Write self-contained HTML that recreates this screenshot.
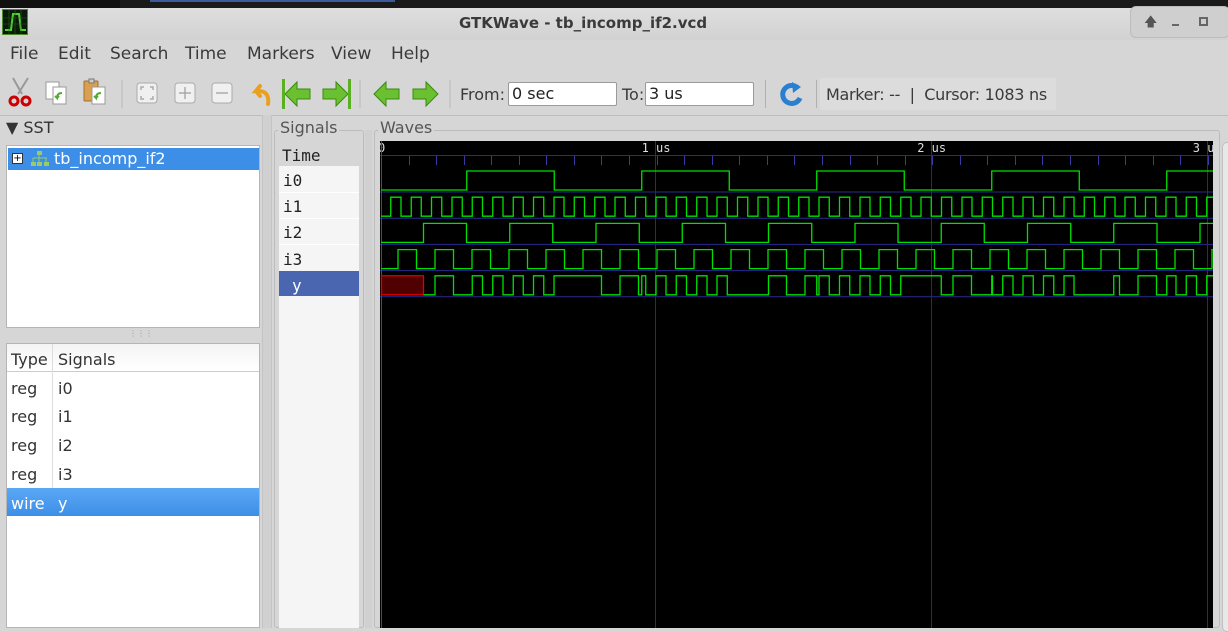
<!DOCTYPE html>
<html><head><meta charset="utf-8"><style>
*{margin:0;padding:0;box-sizing:border-box}
body{width:1228px;height:628px;overflow:hidden;background:#d6d6d6;font-family:"DejaVu Sans","Liberation Sans",sans-serif;color:#333;position:relative}
.a{position:absolute}
.menu span{position:absolute;top:44px;font-size:17px;color:#3a3a3a}
.tb{font-size:16px;color:#3a3a3a;white-space:pre}
.entry{background:#fff;border:1px solid #9a9a9a;border-radius:2px;height:24px;font-size:16px;padding:1px 3px;color:#222}
.sep{width:1px;background:#b0b0b0;height:28px;top:80px}
.mono{font-family:"DejaVu Sans Mono","Liberation Mono",monospace}
</style></head><body>
<div class="a" style="left:0;top:0;width:1228px;height:8px;background:#1a1a1a"></div>
<div class="a" style="left:150px;top:0;width:245px;height:2px;background:#3a5a9a"></div>
<div class="a" style="left:0;top:0;width:120px;height:11px;background:#111;border-radius:0 0 6px 6px"></div>
<div class="a" style="left:0;top:8px;width:1228px;height:32px;background:linear-gradient(#dedede,#d2d2d2)"></div>
<div class="a" style="left:2px;top:9px;width:26px;height:26px;background:#0a1a08;border:1px solid #4a8a2a">
<svg width="24" height="24"><path d="M2 20 L8 20 L10 4 L16 4 L18 20 L23 20" stroke="#4fd030" fill="none" stroke-width="2"/><path d="M0 8H24M0 14H24M6 0V24M12 0V24M18 0V24" stroke="#2a5a1a" stroke-width=".6"/></svg></div>
<div class="a" style="left:459px;top:14px;font-size:15px;font-weight:bold;color:#3a3a3a">GTKWave - tb_incomp_if2.vcd</div>
<div class="a" style="left:1130px;top:6px;width:100px;height:32px;background:#cfcfcf;border:1px solid #bcbcbc;border-radius:6px"></div>
<div class="a" style="left:1144px;top:13px;font-size:13px;color:#555">🡅</div>
<div class="a" style="left:1172px;top:24px;width:7px;height:2px;background:#666"></div>
<div class="a" style="left:1199px;top:17px;width:9px;height:9px;border:2px solid #666"></div>
<div class="menu"><span style="left:10px">File</span><span style="left:58px">Edit</span><span style="left:110px">Search</span><span style="left:185px">Time</span><span style="left:247px">Markers</span><span style="left:331px">View</span><span style="left:391px">Help</span></div>
<svg class="a" style="left:0;top:74px" width="460" height="40">
<g stroke="#999" fill="none" stroke-width="2"><path d="M13 4 L22 20 M28 4 L18 20"/></g>
<circle cx="14" cy="27" r="4" stroke="#c00" stroke-width="3" fill="none"/><circle cx="26" cy="27" r="4" stroke="#c00" stroke-width="3" fill="none"/>
<rect x="46" y="8" width="13" height="17" fill="#fff" stroke="#999"/><rect x="53" y="13" width="13" height="17" fill="#fff" stroke="#999"/><path d="M62 19 q-5 0 -5 5 l-2 -2 m2 2 l2 -2" stroke="#5a3" stroke-width="2" fill="none"/>
<rect x="84" y="7" width="14" height="20" rx="1" fill="#d9a050" stroke="#a07030"/><rect x="89" y="5" width="5" height="4" fill="#ccc" stroke="#777"/><rect x="92" y="13" width="13" height="17" fill="#fff" stroke="#999"/><path d="M101 19 q-5 0 -5 5 l-2 -2 m2 2 l2 -2" stroke="#5a3" stroke-width="2" fill="none"/>
<line x1="122" y1="6" x2="122" y2="34" stroke="#b8b8b8"/>
<g fill="#f0f0f0" stroke="#aaa"><rect x="137" y="9" width="20" height="20" rx="3"/><rect x="175" y="9" width="20" height="20" rx="3"/><rect x="212" y="9" width="20" height="20" rx="3"/></g>
<g stroke="#aaa" fill="none" stroke-width="1.5"><path d="M141 16v-3h3M153 16v-3h-3M141 22v3h3M153 22v3h-3"/><path d="M185 13v12M179 19h12"/><path d="M216 19h12"/></g>
<path d="M268 30 q2 -14 -12 -13 l4 -5 M256 17 l4 5" stroke="#e8a020" stroke-width="4" fill="none" stroke-linecap="round"/>
<g fill="#6ac030" stroke="#3a8a10"><path d="M285 20 l12 -12 v7 h13 v10 h-13 v7z"/><path d="M348 20 l-12 -12 v7 h-13 v10 h13 v7z"/><path d="M374 20 l12 -12 v7 h13 v10 h-13 v7z"/><path d="M438 20 l-12 -12 v7 h-13 v10 h13 v7z"/></g>
<rect x="282" y="5" width="3" height="30" fill="#5ab020"/><rect x="348" y="5" width="3" height="30" fill="#5ab020"/>
<line x1="360" y1="6" x2="360" y2="34" stroke="#b8b8b8"/><line x1="450" y1="6" x2="450" y2="34" stroke="#b8b8b8"/>
</svg>
<div class="a tb" style="left:460px;top:85px">From:</div>
<div class="a entry" style="left:508px;top:82px;width:109px">0 sec</div>
<div class="a tb" style="left:622px;top:85px">To:</div>
<div class="a entry" style="left:645px;top:82px;width:109px">3 us</div>
<div class="a sep" style="left:765px"></div>
<svg class="a" style="left:776px;top:78px" width="30" height="32"><path d="M22 10 A9 9 0 1 0 24 20" stroke="#2a80d0" stroke-width="5" fill="none"/><path d="M16 4 l9 5 -8 6z" fill="#2a80d0"/></svg>
<div class="a sep" style="left:816px"></div>
<div class="a" style="left:820px;top:78px;width:236px;height:32px;background:#dcdcdc"></div>
<div class="a tb" style="left:826px;top:85px;letter-spacing:-0.3px">Marker: --  |  Cursor: 1083 ns</div>
<div class="a" style="left:0;top:115px;width:1228px;height:1px;background:#bdbdbd"></div>
<div class="a" style="left:6px;top:118px;font-size:16px;color:#333">▼ SST</div>
<div class="a" style="left:6px;top:145px;width:254px;height:183px;background:#fff;border:1px solid #b5b5b5"></div>
<div class="a" style="left:8px;top:148px;width:251px;height:22px;background:#3d8ee6"></div>
<div class="a" style="left:12px;top:153px;width:11px;height:11px;background:#fff;border:1px solid #333;font-size:10px;line-height:9px;text-align:center;color:#000">+</div>
<svg class="a" style="left:29px;top:150px" width="22" height="18"><path d="M10 3v5M4 8h14M4 8v4M10 8v4M17 8v4" stroke="#9c6" fill="none"/><rect x="8" y="1" width="5" height="4" fill="#9c6"/><rect x="2" y="12" width="5" height="4" fill="#9c6"/><rect x="8" y="12" width="5" height="4" fill="#9c6"/><rect x="15" y="12" width="5" height="4" fill="#9c6"/></svg>
<div class="a" style="left:54px;top:149px;font-size:16px;color:#fff">tb_incomp_if2</div>
<div class="a" style="left:129px;top:329px;font-size:8px;color:#999">⋮⋮⋮</div>
<div class="a" style="left:6px;top:343px;width:254px;height:285px;background:#fff;border:1px solid #b5b5b5"></div>
<div class="a" style="left:7px;top:344px;width:252px;height:28px;background:linear-gradient(#f4f4f4,#fff);border-bottom:1px solid #ccc"></div>
<div class="a" style="left:52px;top:344px;width:1px;height:172px;background:#ddd"></div>
<div class="a" style="left:7px;top:488px;width:252px;height:28px;background:linear-gradient(#5aa8f6,#3d8ee6)"></div>
<div class="a" style="font-size:16px;left:11px;top:346px;line-height:28.7px">Type<br>reg<br>reg<br>reg<br>reg<br><span style="color:#fff">wire</span></div>
<div class="a" style="font-size:16px;left:58px;top:346px;line-height:28.7px">Signals<br>i0<br>i1<br>i2<br>i3<br><span style="color:#fff">y</span></div>
<div class="a" style="left:262px;top:115px;width:10px;height:513px;background:#d0d0d0;border-left:1px solid #c4c4c4;border-right:1px solid #c4c4c4"></div>
<div class="a" style="left:274px;top:130px;width:90px;height:498px;border:1px solid #bcbcbc;border-radius:3px"></div>
<div class="a" style="left:278px;top:118px;font-size:16px;background:#d6d6d6;padding:0 2px;color:#555">Signals</div>
<div class="a" style="left:279px;top:142px;width:80px;height:486px;background:#f5f5f5"></div>
<div class="a mono" style="left:279px;top:142px;width:80px;height:24px;background:#d6d6d6;font-size:16px;padding:4px 0 0 3px;color:#222">Time</div>
<div class="a" style="left:279px;top:192px;width:80px;height:1px;background:#fff"></div>
<div class="a" style="left:279px;top:218px;width:80px;height:1px;background:#fff"></div>
<div class="a" style="left:279px;top:244px;width:80px;height:1px;background:#fff"></div>
<div class="a" style="left:279px;top:271px;width:80px;height:25px;background:#4a66b0"></div>
<div class="a mono" style="left:283px;top:168px;font-size:16px;line-height:26.2px;color:#222">i0<br>i1<br>i2<br>i3<br><span style="color:#fff;padding-left:9px">y</span></div>
<div class="a" style="left:365px;top:130px;width:7px;height:498px;background:#d0d0d0"></div>
<div class="a" style="left:374px;top:130px;width:846px;height:498px;border:1px solid #bcbcbc;border-radius:3px"></div>
<div class="a" style="left:378px;top:118px;font-size:16px;background:#d6d6d6;padding:0 2px;color:#555">Waves</div>
<div class="a" style="left:1222px;top:142px;width:10px;height:490px;background:#e8e8e8;border:1px solid #c0c0c0;border-radius:5px"></div>
<svg id="w" class="a" style="left:380px;top:141px" width="833" height="487"></svg>
<script>
var s='<rect width="833" height="487" fill="#000"/>';
var X0=381,pu=275.6;
function px(x){return x-380}
s+='<line x1="0" y1="14.5" x2="833" y2="14.5" stroke="#2a2a80"/>';
for(var i=0;i<31;i++){var x=Math.round(X0+i*pu/10);s+='<line x1="'+(px(x)+.5)+'" y1="15" x2="'+(px(x)+.5)+'" y2="24" stroke="#3a3aa0"/>';}
['0','1 us','2 us','3 us'].forEach(function(t,i){var x=px(X0+i*pu);s+='<text x="'+(i?x-15:x-3)+'" y="11" fill="#ddd" font-family="DejaVu Sans Mono,monospace" font-size="12">'+t+'</text>';});
for(var r=0;r<5;r++){var y=51+r*26.2;s+='<line x1="0" y1="'+y+'" x2="833" y2="'+y+'" stroke="#2a2a90"/>';}
[655,931,1207].forEach(function(x){s+='<rect x="'+px(x)+'" y="0" width="1" height="487" fill="#28287a"/>';});
s+='<rect x="1" y="0" width="1" height="487" fill="#4040c0"/>';
function clk(first,half,t){var p=t-first;if(p<0)return 0;return Math.floor(p/half)%2==0?1:0;}
var sig=[function(t){return clk(466.7,87.5,t)},function(t){return clk(390.6,10.2,t)},function(t){return clk(423.3,43.15,t)},function(t){return clk(398,18.5,t)}];
function draw(f,r){var hi=25.5+r*26.2+4.5,lo=hi+19,d='',prev=null;
 for(var x=381;x<=1212;x+=0.25){var v=f(x);if(v!==prev){var yy=v?hi:lo;var xx=px(x).toFixed(2);d+=(prev===null?'M':'L'+xx+' '+(prev?hi:lo)+' L')+xx+' '+yy+' ';prev=v;}}
 d+='L833 '+(prev?hi:lo);s+='<path d="'+d+'" stroke="#00e000" stroke-width="1.3" fill="none"/>';}
for(var k=0;k<4;k++)draw(sig[k],k);
var yv=null;
function yf(t){var i0=sig[0](t),i2=sig[2](t);if(i0)return sig[1](t);if(i2)return sig[3](t);return null;}
var hi=25.5+4*26.2+4.5,lo=hi+19,d='',prev=null,started=false;
for(var x=381;x<=1212;x+=0.25){var v=yf(x);if(v===null){v=yv;}yv=v;if(v===null)continue;
 if(!started){s+='<rect x="1.5" y="'+hi+'" width="'+(px(x)-1.5)+'" height="19" fill="#500000" stroke="#e00000" stroke-width="1.3"/>';d='M'+px(x)+' '+lo;prev=0;started=true;}
 if(v!==prev){var xx=px(x).toFixed(2);d+=' L'+xx+' '+(prev?hi:lo)+' L'+xx+' '+(v?hi:lo);prev=v;}}
d+=' L833 '+(prev?hi:lo);s+='<path d="'+d+'" stroke="#00e000" stroke-width="1.3" fill="none"/>';
document.getElementById('w').innerHTML=s;
</script>
</body></html>
